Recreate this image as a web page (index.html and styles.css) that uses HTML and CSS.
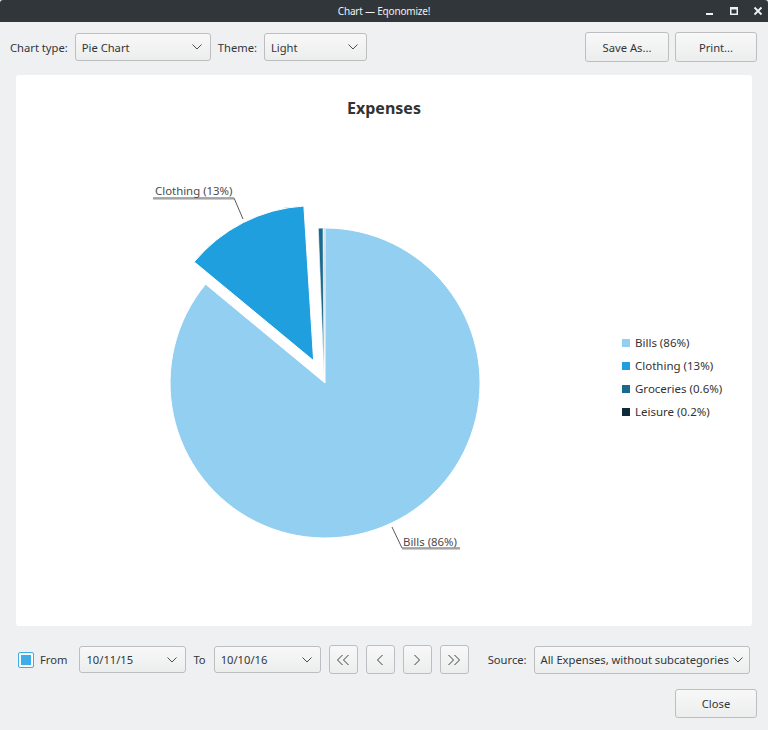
FILE: index.html
```html
<!DOCTYPE html>
<html>
<head>
<meta charset="utf-8">
<link rel="stylesheet" href="styles.css">
</head>
<body>
<div class="window">
  <div class="titlebar">
    <span class="title">Chart — Eqonomize!</span>
    <div class="wm-buttons">
      <svg class="wm" width="10" height="10" viewBox="0 0 10 10"><rect x="1" y="7" width="7" height="2" fill="#eff0f1"/></svg>
      <svg class="wm" width="10" height="10" viewBox="0 0 10 10"><rect x="1.75" y="1.75" width="6.5" height="6.5" fill="none" stroke="#eff0f1" stroke-width="1.5"/><rect x="1" y="1" width="8" height="2.5" fill="#eff0f1"/></svg>
      <svg class="wm" width="10" height="10" viewBox="0 0 10 10"><path d="M1.5 1.5 L8.5 8.5 M8.5 1.5 L1.5 8.5" stroke="#eff0f1" stroke-width="1.8"/></svg>
    </div>
  </div>

  <div class="toolbar">
    <div class="group">
      <span class="label">Chart type:</span>
      <div class="combo combo-type"><span>Pie Chart</span><svg class="chev" width="10" height="6" viewBox="0 0 10 6"><path d="M0.5 0.5 L5 5 L9.5 0.5" fill="none" stroke="#4d4d4d" stroke-width="1"/></svg></div>
      <span class="label">Theme:</span>
      <div class="combo combo-theme"><span>Light</span><svg class="chev" width="10" height="6" viewBox="0 0 10 6"><path d="M0.5 0.5 L5 5 L9.5 0.5" fill="none" stroke="#4d4d4d" stroke-width="1"/></svg></div>
    </div>
    <div class="group right">
      <button class="btn btn-save">Save As...</button>
      <button class="btn btn-print">Print...</button>
    </div>
  </div>

  <div class="card">
    <svg class="chart" width="736" height="551" viewBox="0 0 736 551">
      <text x="368" y="39" class="chart-title" text-anchor="middle">Expenses</text>
      <!-- Bills -->
      <path d="M309 308 L309 153 A155 155 0 1 1 189.6 209.2 Z" fill="#93cff0" stroke="#fff" stroke-width="1"/>
      <!-- Clothing (exploded) -->
      <path d="M297.65 285.7 L178.2 186.9 A155 155 0 0 1 287.9 131.0 Z" fill="#209fdf" stroke="#fff" stroke-width="1"/>
      <!-- Groceries -->
      <path d="M308 300 L302.3 153.3 A155 155 0 0 1 307.0 153.05 Z" fill="#1a6a90" stroke="#fff" stroke-width="0.6"/>
      <!-- Leisure -->
      <path d="M309 308 L307.6 153.05 A155 155 0 0 1 308.6 153.01 Z" fill="#c5d3da" stroke="none"/>

      <!-- Clothing label -->
      <text x="139" y="120" class="slice-label">Clothing (13%)</text>
      <polyline points="137,123 218,123 227,144" fill="none" stroke="#5a5a5a" stroke-width="1"/>
      <line x1="137" y1="124" x2="218" y2="124" stroke="#9a9a9a" stroke-width="1"/>
      <!-- Bills label -->
      <text x="387" y="471" class="slice-label">Bills (86%)</text>
      <polyline points="376,452 386,473 444,473" fill="none" stroke="#5a5a5a" stroke-width="1"/>
      <line x1="386" y1="474" x2="444" y2="474" stroke="#9a9a9a" stroke-width="1"/>

      <!-- Legend -->
      <rect x="606" y="264" width="8" height="8" fill="#93cff0"/>
      <text x="619" y="272" class="legend">Bills (86%)</text>
      <rect x="606" y="287" width="8" height="8" fill="#209fdf"/>
      <text x="619" y="295" class="legend">Clothing (13%)</text>
      <rect x="606" y="310" width="8" height="8" fill="#1a6a90"/>
      <text x="619" y="318" class="legend">Groceries (0.6%)</text>
      <rect x="606" y="333" width="8" height="8" fill="#0d2b3b"/>
      <text x="619" y="341" class="legend">Leisure (0.2%)</text>
    </svg>
  </div>

  <div class="bottom">
    <div class="check"><span class="check-inner"></span></div>
    <span class="label from">From</span>
    <div class="combo combo-date"><span>10/11/15</span><svg class="chev" width="10" height="6" viewBox="0 0 10 6"><path d="M0.5 0.5 L5 5 L9.5 0.5" fill="none" stroke="#4d4d4d" stroke-width="1"/></svg></div>
    <span class="label to">To</span>
    <div class="combo combo-date"><span>10/10/16</span><svg class="chev" width="10" height="6" viewBox="0 0 10 6"><path d="M0.5 0.5 L5 5 L9.5 0.5" fill="none" stroke="#4d4d4d" stroke-width="1"/></svg></div>
    <div class="navs">
      <button class="btn nav"><svg width="14" height="12" viewBox="0 0 14 12"><path d="M6.5 1 L1.5 6 L6.5 11 M12.5 1 L7.5 6 L12.5 11" fill="none" stroke="#3a3f44" stroke-width="1"/></svg></button>
      <button class="btn nav"><svg width="8" height="12" viewBox="0 0 8 12"><path d="M6.5 1 L1.5 6 L6.5 11" fill="none" stroke="#3a3f44" stroke-width="1"/></svg></button>
      <button class="btn nav"><svg width="8" height="12" viewBox="0 0 8 12"><path d="M1.5 1 L6.5 6 L1.5 11" fill="none" stroke="#3a3f44" stroke-width="1"/></svg></button>
      <button class="btn nav"><svg width="14" height="12" viewBox="0 0 14 12"><path d="M1.5 1 L6.5 6 L1.5 11 M7.5 1 L12.5 6 L7.5 11" fill="none" stroke="#3a3f44" stroke-width="1"/></svg></button>
    </div>
    <span class="label source">Source:</span>
    <div class="combo combo-source"><span>All Expenses, without subcategories</span><svg class="chev" width="10" height="6" viewBox="0 0 10 6"><path d="M0.5 0.5 L5 5 L9.5 0.5" fill="none" stroke="#4d4d4d" stroke-width="1"/></svg></div>
  </div>

  <div class="footer">
    <button class="btn btn-close">Close</button>
  </div>
</div>
</body>
</html>
```

FILE: styles.css
```css
* { box-sizing: border-box; }
html, body {
  margin: 0;
  padding: 0;
  width: 768px;
  height: 730px;
  overflow: hidden;
  background: #eff0f1;
  font-family: "Noto Sans", "DejaVu Sans", sans-serif;
  font-size: 11.2px;
  color: #31363b;
}
.window {
  width: 768px;
  height: 730px;
  background: #eff0f1;
}
.titlebar {
  height: 22px;
  background: #31363b;
  border-radius: 3px 3px 0 0;
  display: flex;
  align-items: center;
  justify-content: center;
  position: relative;
}
.title {
  color: #eff0f1;
  font-size: 10px;
  letter-spacing: -0.2px;
}
.wm-buttons {
  position: absolute;
  right: 5px;
  top: 6px;
  display: flex;
  gap: 14px;
}
.wm { display: block; }

.toolbar {
  display: flex;
  justify-content: space-between;
  align-items: center;
  height: 30px;
  margin-top: 10px;
  padding: 0 11px 0 10px;
}
.group {
  display: flex;
  align-items: center;
  gap: 7px;
}
.group.right { gap: 6px; }
.label {
  color: #31363b;
  white-space: nowrap;
  flex: none;
}
.combo {
  flex: none;
  height: 28px;
  border: 1px solid #bcbebf;
  border-radius: 3px;
  background: linear-gradient(#f8f8f9, #eceded);
  display: flex;
  align-items: center;
  justify-content: space-between;
  padding: 0 8px 0 6px;
  white-space: nowrap;
}
.chev { display: block; flex: none; }
.combo-type { width: 136px; }
.combo-theme { width: 103px; }
.btn {
  flex: none;
  height: 30px;
  border: 1px solid #bcbebf;
  border-radius: 3px;
  background: linear-gradient(#f8f8f9, #eceded);
  font-family: inherit;
  font-size: 11.2px;
  color: #31363b;
  padding: 0;
  display: flex;
  align-items: center;
  justify-content: center;
}
.btn-save { width: 84px; }
.btn-print { width: 82px; }

.card {
  margin: 13px 16px 0 16px;
  height: 551px;
  background: #fff;
  border-radius: 3px;
}
.chart { display: block; }
.chart-title {
  font-family: "Noto Sans", sans-serif;
  font-size: 16px;
  font-weight: bold;
  fill: #333;
}
.slice-label {
  font-family: "Noto Sans", sans-serif;
  font-size: 11.4px;
  fill: #4a4a4a;
}
.legend {
  font-family: "Noto Sans", sans-serif;
  font-size: 11.5px;
  fill: #333;
}

.bottom {
  display: flex;
  align-items: center;
  height: 29px;
  margin-top: 19px;
  padding: 0 17px 0 18px;
}
.check {
  width: 16px;
  height: 16px;
  border: 1px solid #3daee9;
  border-radius: 2px;
  background: #fcfcfc;
  padding: 2px;
  flex: none;
}
.check-inner {
  display: block;
  width: 100%;
  height: 100%;
  background: #3daee9;
}
.from { margin-left: 6px; margin-right: 12px; }
.to { margin-left: 7px; margin-right: 8px; }
.combo-date { width: 107px; height: 27px; }
.navs {
  display: flex;
  gap: 8px;
  margin-left: 8px;
  flex: none;
}
.nav { width: 29px; height: 29px; }
.source { margin-left: 19px; margin-right: 7px; }
.combo-source { width: 216px; padding-right: 6px; }

.footer {
  display: flex;
  justify-content: flex-end;
  margin-top: 15px;
  padding-right: 11px;
}
.btn-close { width: 82px; height: 29px; }
```
